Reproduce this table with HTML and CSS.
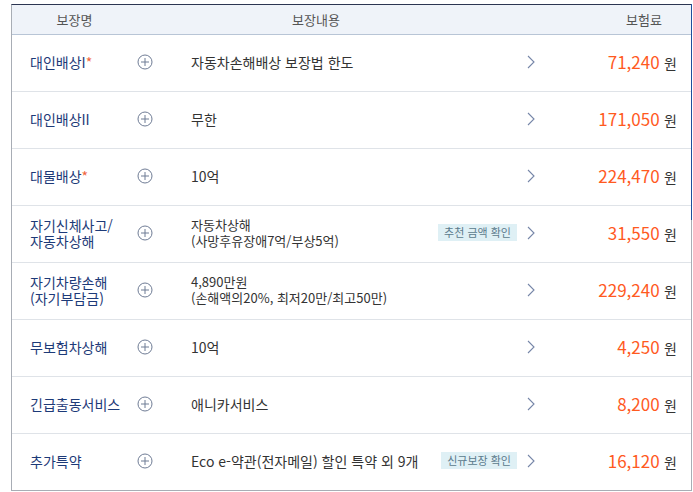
FILE: index.html
```html
<!DOCTYPE html>
<html lang="ko">
<head>
<meta charset="utf-8">
<link rel="stylesheet" href="styles.css">
</head>
<body>
<div class="table">
  <div class="accent"></div>
  <div class="head">
    <div class="h-name">보장명</div>
    <div class="h-content">보장내용</div>
    <div class="h-price">보험료</div>
  </div>

  <div class="row">
    <div class="name">대인배상I<span class="req">*</span></div>
    <svg class="plus" viewBox="0 0 16 16"><circle cx="8" cy="8" r="7"/><path d="M8 4v8M4 8h8"/></svg>
    <div class="content"><div class="text">자동차손해배상 보장법 한도</div></div>
    <svg class="chev" viewBox="0 0 8 14"><path d="M1 1l6 6-6 6"/></svg>
    <div class="price"><span class="num">71,240</span> <span class="won">원</span></div>
  </div>

  <div class="row">
    <div class="name">대인배상II</div>
    <svg class="plus" viewBox="0 0 16 16"><circle cx="8" cy="8" r="7"/><path d="M8 4v8M4 8h8"/></svg>
    <div class="content"><div class="text">무한</div></div>
    <svg class="chev" viewBox="0 0 8 14"><path d="M1 1l6 6-6 6"/></svg>
    <div class="price"><span class="num">171,050</span> <span class="won">원</span></div>
  </div>

  <div class="row">
    <div class="name">대물배상<span class="req">*</span></div>
    <svg class="plus" viewBox="0 0 16 16"><circle cx="8" cy="8" r="7"/><path d="M8 4v8M4 8h8"/></svg>
    <div class="content"><div class="text">10억</div></div>
    <svg class="chev" viewBox="0 0 8 14"><path d="M1 1l6 6-6 6"/></svg>
    <div class="price"><span class="num">224,470</span> <span class="won">원</span></div>
  </div>

  <div class="row">
    <div class="name">자기신체사고/<br>자동차상해</div>
    <svg class="plus" viewBox="0 0 16 16"><circle cx="8" cy="8" r="7"/><path d="M8 4v8M4 8h8"/></svg>
    <div class="content">
      <div class="text two">자동차상해<br>(사망후유장애7억/부상5억)</div>
      <span class="badge">추천 금액 확인</span>
    </div>
    <svg class="chev" viewBox="0 0 8 14"><path d="M1 1l6 6-6 6"/></svg>
    <div class="price"><span class="num">31,550</span> <span class="won">원</span></div>
  </div>

  <div class="row">
    <div class="name">자기차량손해<br>(자기부담금)</div>
    <svg class="plus" viewBox="0 0 16 16"><circle cx="8" cy="8" r="7"/><path d="M8 4v8M4 8h8"/></svg>
    <div class="content"><div class="text two">4,890만원<br>(손해액의20%, 최저20만/최고50만)</div></div>
    <svg class="chev" viewBox="0 0 8 14"><path d="M1 1l6 6-6 6"/></svg>
    <div class="price"><span class="num">229,240</span> <span class="won">원</span></div>
  </div>

  <div class="row">
    <div class="name">무보험차상해</div>
    <svg class="plus" viewBox="0 0 16 16"><circle cx="8" cy="8" r="7"/><path d="M8 4v8M4 8h8"/></svg>
    <div class="content"><div class="text">10억</div></div>
    <svg class="chev" viewBox="0 0 8 14"><path d="M1 1l6 6-6 6"/></svg>
    <div class="price"><span class="num">4,250</span> <span class="won">원</span></div>
  </div>

  <div class="row">
    <div class="name">긴급출동서비스</div>
    <svg class="plus" viewBox="0 0 16 16"><circle cx="8" cy="8" r="7"/><path d="M8 4v8M4 8h8"/></svg>
    <div class="content"><div class="text">애니카서비스</div></div>
    <svg class="chev" viewBox="0 0 8 14"><path d="M1 1l6 6-6 6"/></svg>
    <div class="price"><span class="num">8,200</span> <span class="won">원</span></div>
  </div>

  <div class="row last">
    <div class="name">추가특약</div>
    <svg class="plus" viewBox="0 0 16 16"><circle cx="8" cy="8" r="7"/><path d="M8 4v8M4 8h8"/></svg>
    <div class="content">
      <div class="text">Eco e-약관(전자메일) 할인 특약 외 9개</div>
      <span class="badge">신규보장 확인</span>
    </div>
    <svg class="chev" viewBox="0 0 8 14"><path d="M1 1l6 6-6 6"/></svg>
    <div class="price"><span class="num">16,120</span> <span class="won">원</span></div>
  </div>
</div>
</body>
</html>
```

FILE: styles.css
```css
* { box-sizing: border-box; }
html, body { margin: 0; padding: 0; background: #ffffff; }
body {
  font-family: "Noto Sans CJK KR", "Noto Sans", sans-serif;
  color: #333;
}
.table {
  position: relative;
  margin: 4px 0 0 11px;
  width: 681px;
  border-top: 1px solid #2b3552;
  border-left: 1px solid #a8adb5;
  border-right: 1px solid #a8adb5;
  border-bottom: 1px solid #a8adb5;
}
.accent {
  position: absolute;
  right: -1px;
  top: -1px;
  width: 1px;
  height: 216px;
  background: #1f4f9c;
}
.head {
  display: grid;
  grid-template-columns: 125px 358px 1fr;
  height: 30px;
  align-items: center;
  background: #eff3f9;
  border-bottom: 1px solid #b8c5d6;
  font-size: 13px;
  color: #555;
}
.h-name, .h-content { text-align: center; }
.h-price { text-align: right; padding-right: 29px; }
.row {
  display: grid;
  grid-template-columns: 125px 16px 38px 326px 10px 8px 142px;
  grid-template-areas: "name plus . content . chev price";
  align-items: center;
  height: 57px;
  border-bottom: 1px solid #dfe3e8;
  padding-bottom: 3px;
}
.row.last { border-bottom: none; height: 56px; }
.name {
  grid-area: name;
  padding-left: 18px;
  font-size: 14px;
  line-height: 16px;
  color: #1d3a78;
}
.req { color: #f0643c; }
.plus {
  grid-area: plus;
  width: 16px;
  height: 16px;
  fill: none;
  stroke: #6f7c95;
  stroke-width: 1;
}
.content {
  grid-area: content;
  display: flex;
  align-items: center;
  justify-content: space-between;
}
.text {
  font-size: 14px;
  line-height: 16px;
  color: #333;
}
.text.two { font-size: 13px; }
.badge {
  background: #dff0f5;
  color: #5b7a8c;
  font-size: 11px;
  line-height: 17px;
  padding: 0 6px;
  white-space: nowrap;
}
.chev {
  grid-area: chev;
  width: 8px;
  height: 14px;
  fill: none;
  stroke: #7686a8;
  stroke-width: 1.1;
}
.price {
  grid-area: price;
  text-align: right;
  white-space: nowrap;
}
.num { font-size: 17px; color: #ff5a1f; }
.won { font-size: 14px; color: #333; }
```
